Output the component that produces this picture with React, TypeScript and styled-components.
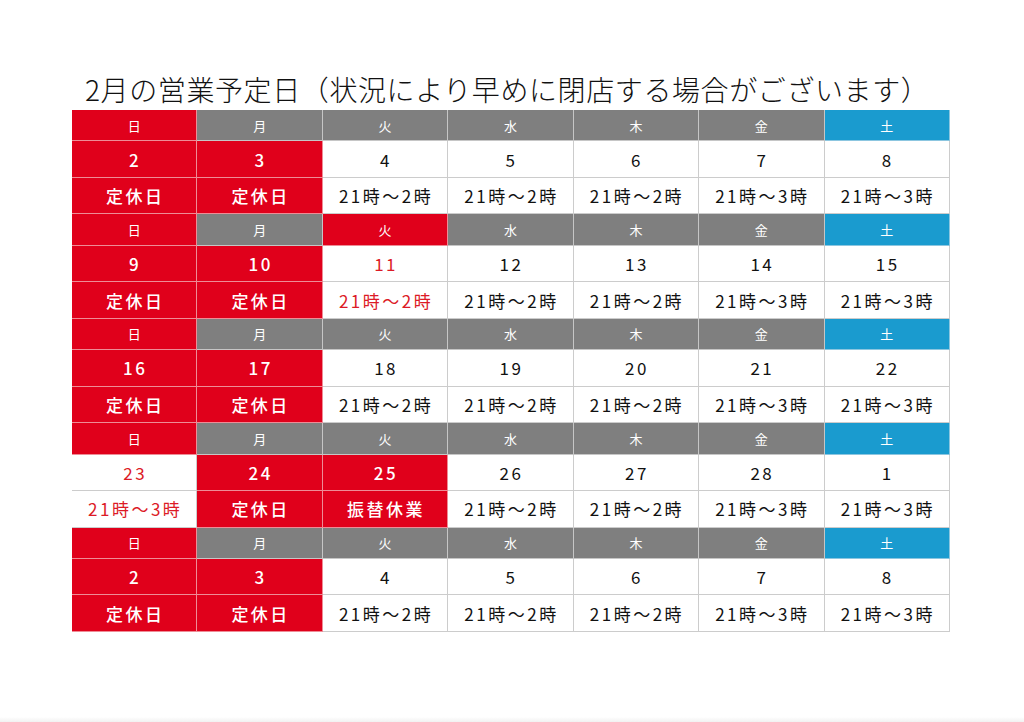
import React from "react";
import styled, { createGlobalStyle } from "styled-components";

type Tone = "red" | "gray" | "blue" | "white" | "redText";

type Day = { date: string; label: string; dateTone: Tone; labelTone: Tone };
type Week = { head: Tone[]; days: Day[] };

const WEEKDAYS = ["日", "月", "火", "水", "木", "金", "土"];
const BASE_HEAD: Tone[] = ["red", "gray", "gray", "gray", "gray", "gray", "blue"];

const closed = (date: string): Day => ({ date, label: "定休日", dateTone: "red", labelTone: "red" });
const open = (date: string, label: string): Day => ({ date, label, dateTone: "white", labelTone: "white" });

const WEEKS: Week[] = [
    {
        head: BASE_HEAD,
        days: [closed("2"), closed("3"), open("4", "21時〜2時"), open("5", "21時〜2時"), open("6", "21時〜2時"), open("7", "21時〜3時"), open("8", "21時〜3時")],
    },
    {
        head: ["red", "gray", "red", "gray", "gray", "gray", "blue"],
        days: [
            closed("9"), closed("10"),
            { date: "11", label: "21時〜2時", dateTone: "redText", labelTone: "redText" },
            open("12", "21時〜2時"), open("13", "21時〜2時"), open("14", "21時〜3時"), open("15", "21時〜3時"),
        ],
    },
    {
        head: BASE_HEAD,
        days: [closed("16"), closed("17"), open("18", "21時〜2時"), open("19", "21時〜2時"), open("20", "21時〜2時"), open("21", "21時〜3時"), open("22", "21時〜3時")],
    },
    {
        head: BASE_HEAD,
        days: [
            { date: "23", label: "21時〜3時", dateTone: "redText", labelTone: "redText" },
            closed("24"),
            { date: "25", label: "振替休業", dateTone: "red", labelTone: "red" },
            open("26", "21時〜2時"), open("27", "21時〜2時"), open("28", "21時〜3時"), open("1", "21時〜3時"),
        ],
    },
    {
        head: BASE_HEAD,
        days: [closed("2"), closed("3"), open("4", "21時〜2時"), open("5", "21時〜2時"), open("6", "21時〜2時"), open("7", "21時〜3時"), open("8", "21時〜3時")],
    },
];

const App: React.FC = () => {
    return (
        <Page>
            <GlobalStyle />
            <Sheet>
                <Title>2月の営業予定日（状況により早めに閉店する場合がございます）</Title>
                <Calendar>
                    {WEEKS.map((week, w) => (
                        <React.Fragment key={w}>
                            {WEEKDAYS.map((d, i) => (
                                <HeadCell key={`h${i}`} tone={week.head[i]}>{d}</HeadCell>
                            ))}
                            {week.days.map((day, i) => (
                                <DateCell key={`d${i}`} tone={day.dateTone}>{day.date}</DateCell>
                            ))}
                            {week.days.map((day, i) => (
                                <LabelCell key={`l${i}`} tone={day.labelTone}>{day.label}</LabelCell>
                            ))}
                        </React.Fragment>
                    ))}
                </Calendar>
            </Sheet>
            <BottomEdge />
        </Page>
    );
};

const GlobalStyle = createGlobalStyle`
    html, body {
        margin: 0;
        padding: 0;
        background: #ffffff;
    }
    body {
        font-family: "Noto Sans CJK JP", "Noto Sans", sans-serif;
    }
`;

const bg: Record<Tone, string> = {
    red: "#e0001b",
    gray: "#7f7f7f",
    blue: "#1a9bcf",
    white: "#ffffff",
    redText: "#ffffff",
};

const fg: Record<Tone, string> = {
    red: "#ffffff",
    gray: "#ffffff",
    blue: "#ffffff",
    white: "#111111",
    redText: "#dc1a26",
};

const line: Record<Tone, string> = {
    red: "#ee8c96",
    gray: "#c6c6c6",
    blue: "#8cc6e0",
    white: "#cccccc",
    redText: "#cccccc",
};

const Page = styled.div`
    width: 1024px;
    height: 722px;
    display: flex;
    flex-direction: column;
    overflow: hidden;
`;

const Sheet = styled.main`
    flex: 1;
    display: flex;
    flex-direction: column;
    padding: 72px 0 0 72px;
`;

const Title = styled.h1`
    margin: 0 0 4px 13px;
    height: 34px;
    font-size: 28px;
    line-height: 34px;
    font-weight: 300;
    color: #111111;
    letter-spacing: 0.6px;
    white-space: nowrap;
`;

const Calendar = styled.div`
    width: 878px;
    display: grid;
    grid-template-columns: repeat(7, 1fr);
    grid-auto-rows: 31.4px 36.5px 36.5px;
`;

const Cell = styled.div<{ tone: Tone }>`
    display: flex;
    align-items: center;
    justify-content: center;
    box-sizing: border-box;
    background: ${({ tone }) => bg[tone]};
    color: ${({ tone }) => fg[tone]};
    border-right: 1px solid ${({ tone }) => line[tone]};
    border-bottom: 1px solid ${({ tone }) => line[tone]};
    white-space: nowrap;
`;

const HeadCell = styled(Cell)`
    font-size: 13px;
    font-weight: 400;
`;

const DateCell = styled(Cell)`
    font-size: 17px;
    letter-spacing: 2.5px;
    padding-left: 2px;
    font-weight: ${({ tone }) => (tone === "red" ? 500 : 400)};
`;

const LabelCell = styled(Cell)`
    font-size: 17px;
    letter-spacing: 2.5px;
    padding-left: 2px;
    font-weight: ${({ tone }) => (tone === "red" ? 500 : 400)};
`;

const BottomEdge = styled.div`
    height: 5px;
    background: linear-gradient(#ffffff, #f1f1f1);
`;

export default App;
